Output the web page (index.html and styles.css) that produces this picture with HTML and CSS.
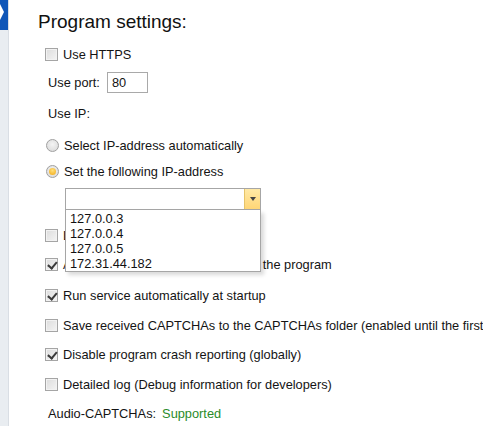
FILE: index.html
```html
<!DOCTYPE html>
<html>
<head>
<meta charset="utf-8">
<link rel="stylesheet" href="styles.css">
</head>
<body>
<div class="app">
  <div class="sidebar"><div class="sidebar-top"><div class="notch"></div></div></div>
  <div class="content">
    <h1 class="title">Program settings:</h1>
    <div class="row r-https"><span class="cb"></span><span>Use HTTPS</span></div>
    <div class="row r-port"><span class="lbl">Use port:</span><span class="input">80</span></div>
    <div class="row r-ip"><span class="lbl">Use IP:</span></div>
    <div class="row r-radio1"><span class="radio"></span><span>Select IP-address automatically</span></div>
    <div class="row r-radio2"><span class="radio on"></span><span>Set the following IP-address</span></div>
    <div class="combo-wrap">
      <div class="combo"><div class="combo-field"></div><div class="combo-btn"><span class="arrow"></span></div></div>
      <div class="dropdown">
        <div class="item">127.0.0.3</div>
        <div class="item">127.0.0.4</div>
        <div class="item">127.0.0.5</div>
        <div class="item">172.31.44.182</div>
      </div>
    </div>
    <div class="row r-h1"><span class="cb"></span><span>Launch minimized</span></div>
    <div class="row r-h2"><span class="cb checked"></span><span>Automatically check for updates in <span class="tail">the program</span></span></div>
    <div class="row r-run"><span class="cb checked"></span><span>Run service automatically at startup</span></div>
    <div class="row r-save"><span class="cb"></span><span>Save received CAPTCHAs to the CAPTCHAs folder (enabled until the first program restart)</span></div>
    <div class="row r-dis"><span class="cb checked"></span><span>Disable program crash reporting (globally)</span></div>
    <div class="row r-log"><span class="cb"></span><span>Detailed log (Debug information for developers)</span></div>
    <div class="row r-audio"><span class="lbl">Audio-CAPTCHAs:</span><span class="ok">Supported</span></div>
  </div>
</div>
</body>
</html>
```
FILE: styles.css
```css
html, body {
  margin: 0;
  padding: 0;
  background: #fff;
}
body {
  width: 483px;
  height: 426px;
  overflow: hidden;
  font-family: "Liberation Sans", Arial, sans-serif;
  font-size: 12.8px;
  color: #141414;
}
.app {
  display: flex;
  height: 426px;
  overflow: hidden;
}
.sidebar {
  width: 8px;
  flex: none;
  background: #e9edf1;
  border-right: 1px solid #d9dee4;
}
.sidebar-top {
  position: relative;
  height: 30px;
  background: #0f56b8;
}
.notch {
  position: absolute;
  left: 0;
  top: 4px;
  width: 0;
  height: 0;
  border-top: 8px solid transparent;
  border-bottom: 8px solid transparent;
  border-left: 4px solid #fff;
}
.content {
  flex: 1;
  position: relative;
  padding-left: 29px;
  display: flex;
  flex-direction: column;
  min-width: 0;
  overflow: hidden;
}
.title {
  margin: 7px 0 0 0;
  height: 30px;
  line-height: 30px;
  font-size: 19px;
  font-weight: normal;
  color: #111;
}
.row {
  display: flex;
  align-items: center;
  height: 20px;
  padding-left: 7px;
  white-space: nowrap;
}
.row .lbl { margin-left: 3px; }
.tail { margin-left: 2px; }
.r-https { margin-top: 7px; }
.r-port { margin-top: 8px; height: 21px; }
.r-ip { margin-top: 10px; }
.r-radio1 { margin-top: 12px; }
.r-radio2 { margin-top: 6px; }
.r-h1 { margin-top: 15px; }
.r-h2 { margin-top: 9px; }
.r-run { margin-top: 11px; }
.r-save { margin-top: 10px; }
.r-dis { margin-top: 9px; }
.r-log { margin-top: 10px; }
.r-audio { margin-top: 9px; }

.cb {
  flex: none;
  box-sizing: border-box;
  width: 13px;
  height: 13px;
  border: 1px solid #a5a5a5;
  background: linear-gradient(135deg, #dcdcdc, #f4f4f4);
  box-shadow: inset 0 0 0 1px #f2f2f2;
  margin-right: 5px;
  position: relative;
}
.cb.checked::after {
  content: "";
  position: absolute;
  left: 2px;
  top: 1px;
  width: 4px;
  height: 7px;
  border-right: 2px solid #3a3a3a;
  border-bottom: 2px solid #3a3a3a;
  transform: rotate(40deg) translate(1px, -1px);
}
.radio {
  flex: none;
  box-sizing: border-box;
  width: 13px;
  height: 13px;
  border-radius: 50%;
  border: 1px solid #a0a0a0;
  background: radial-gradient(circle at 50% 40%, #f4f4f4, #d6d6d6);
  margin-right: 5px;
  margin-left: 1px;
  position: relative;
}
.radio.on::after {
  content: "";
  position: absolute;
  left: 2px;
  top: 2px;
  width: 7px;
  height: 7px;
  border-radius: 50%;
  background: radial-gradient(circle at 50% 35%, #ffe07a, #f2a713);
}
.input {
  box-sizing: border-box;
  margin-left: 7px;
  width: 41px;
  height: 21px;
  border: 1px solid #a9a9a9;
  padding-left: 4px;
  line-height: 19px;
}
.combo-wrap {
  position: relative;
  margin-top: 7px;
  margin-left: 27px;
  width: 196px;
  height: 22px;
}
.combo {
  box-sizing: border-box;
  display: flex;
  width: 196px;
  height: 22px;
  border: 1px solid #a6a6a6;
  background: #fff;
}
.combo-field { flex: 1; }
.combo-btn {
  width: 15px;
  background: linear-gradient(#ffe9a6, #ffd676);
  border-left: 1px solid #e6c46a;
  display: flex;
  align-items: center;
  justify-content: center;
}
.arrow {
  width: 0;
  height: 0;
  border-left: 3.5px solid transparent;
  border-right: 3.5px solid transparent;
  border-top: 4px solid #444;
}
.dropdown {
  position: absolute;
  left: 0;
  top: 22px;
  box-sizing: border-box;
  width: 196px;
  height: 62px;
  border: 1px solid #a6a6a6;
  border-top: none;
  background: #fff;
  box-shadow: 3px 3px 4px rgba(0,0,0,0.15);
  padding-top: 1px;
  z-index: 2;
}
.item {
  height: 15px;
  line-height: 15px;
  padding-left: 4px;
  color: #111;
}
.ok {
  margin-left: 6px;
  color: #2a8b2a;
}
```
